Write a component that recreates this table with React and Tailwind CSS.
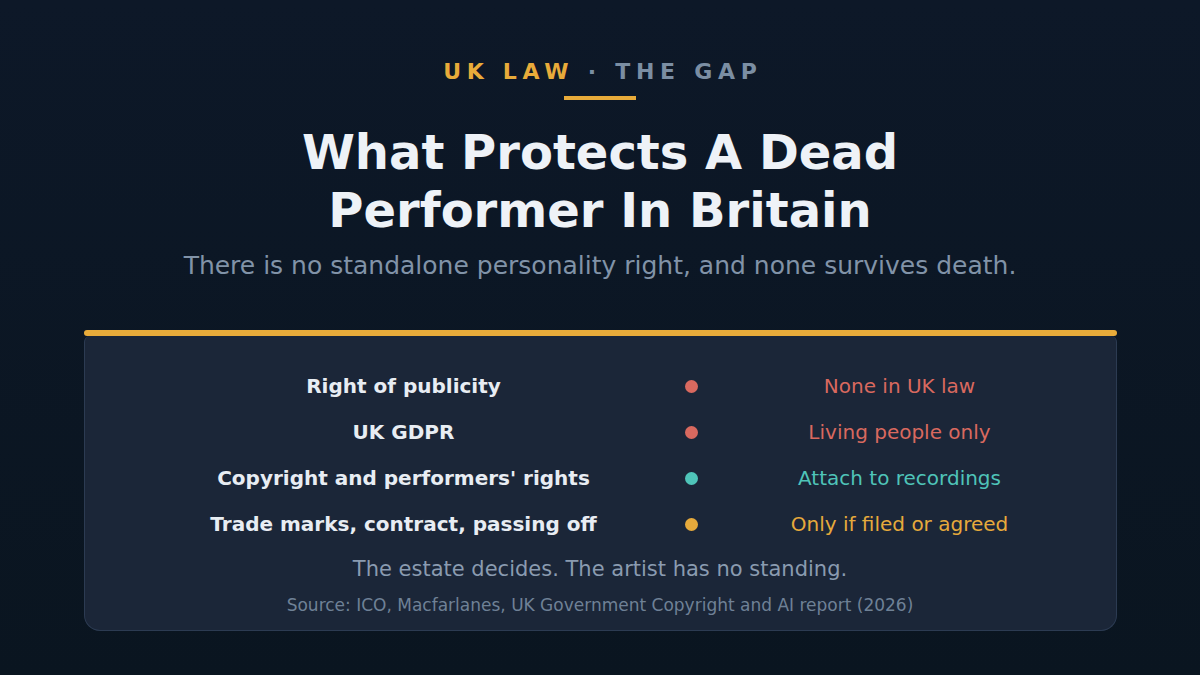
import React from 'react';

const rows = [
  { label: 'Right of publicity', value: 'None in UK law', dot: 'bg-[#d9695f]', text: 'text-[#d9695f]' },
  { label: 'UK GDPR', value: 'Living people only', dot: 'bg-[#d9695f]', text: 'text-[#d9695f]' },
  { label: "Copyright and performers' rights", value: 'Attach to recordings', dot: 'bg-[#4fc4b9]', text: 'text-[#4fc4b9]' },
  { label: 'Trade marks, contract, passing off', value: 'Only if filed or agreed', dot: 'bg-[#e6aa3c]', text: 'text-[#e6aa3c]' },
];

export default function App() {
  return (
    <div className="w-[1200px] h-[675px] overflow-hidden bg-gradient-to-b from-[#0d1828] to-[#0a1520] font-['DejaVu_Sans',sans-serif] flex flex-col items-center pt-[57px]">
      {/* Eyebrow */}
      <div className="text-[22px] leading-[30px] font-bold tracking-[0.26em] pl-[0.26em]">
        <span className="text-[#e8ab3a]">UK LAW</span>
        <span className="text-[#7b8ea3]"> · THE GAP</span>
      </div>
      <div className="mt-[9px] w-[72px] h-1 bg-[#e8ab3a]" />

      {/* Title */}
      <h1 className="mt-[24px] text-[48px] leading-[1.2] font-bold text-[#eef2f7] text-center">
        What Protects A Dead
        <br />
        Performer In Britain
      </h1>
      <p className="mt-[11px] text-[25px] leading-[32px] text-[#8193a8]">
        There is no standalone personality right, and none survives death.
      </p>

      {/* Card */}
      <div className="mt-[48px] w-[1033px] flex flex-col">
        <div className="h-[6px] rounded-full bg-[#e8ab3a]" />
        <div className="rounded-b-2xl rounded-t-[6px] bg-[#1b2638] border border-t-0 border-[#2c3b52] pt-[27px] pb-[14px]">
          <div className="flex flex-col">
            {rows.map((r) => (
              <div key={r.label} className="h-[46px] flex items-center pl-[39px]">
                <div className="w-[560px] text-center text-[20px] font-bold text-[#e8edf3]">{r.label}</div>
                <div className="w-[16px] flex justify-center">
                  <span className={`w-[13px] h-[13px] rounded-full ${r.dot}`} />
                </div>
                <div className={`w-[400px] text-center text-[20px] ${r.text}`}>{r.value}</div>
              </div>
            ))}
          </div>
          <p className="mt-2 text-center text-[21px] leading-[28px] text-[#8a9bb0]">
            The estate decides. The artist has no standing.
          </p>
          <p className="mt-[11px] text-center text-[17px] leading-[22px] text-[#6f8196]">
            Source: ICO, Macfarlanes, UK Government Copyright and AI report (2026)
          </p>
        </div>
      </div>
    </div>
  );
}
